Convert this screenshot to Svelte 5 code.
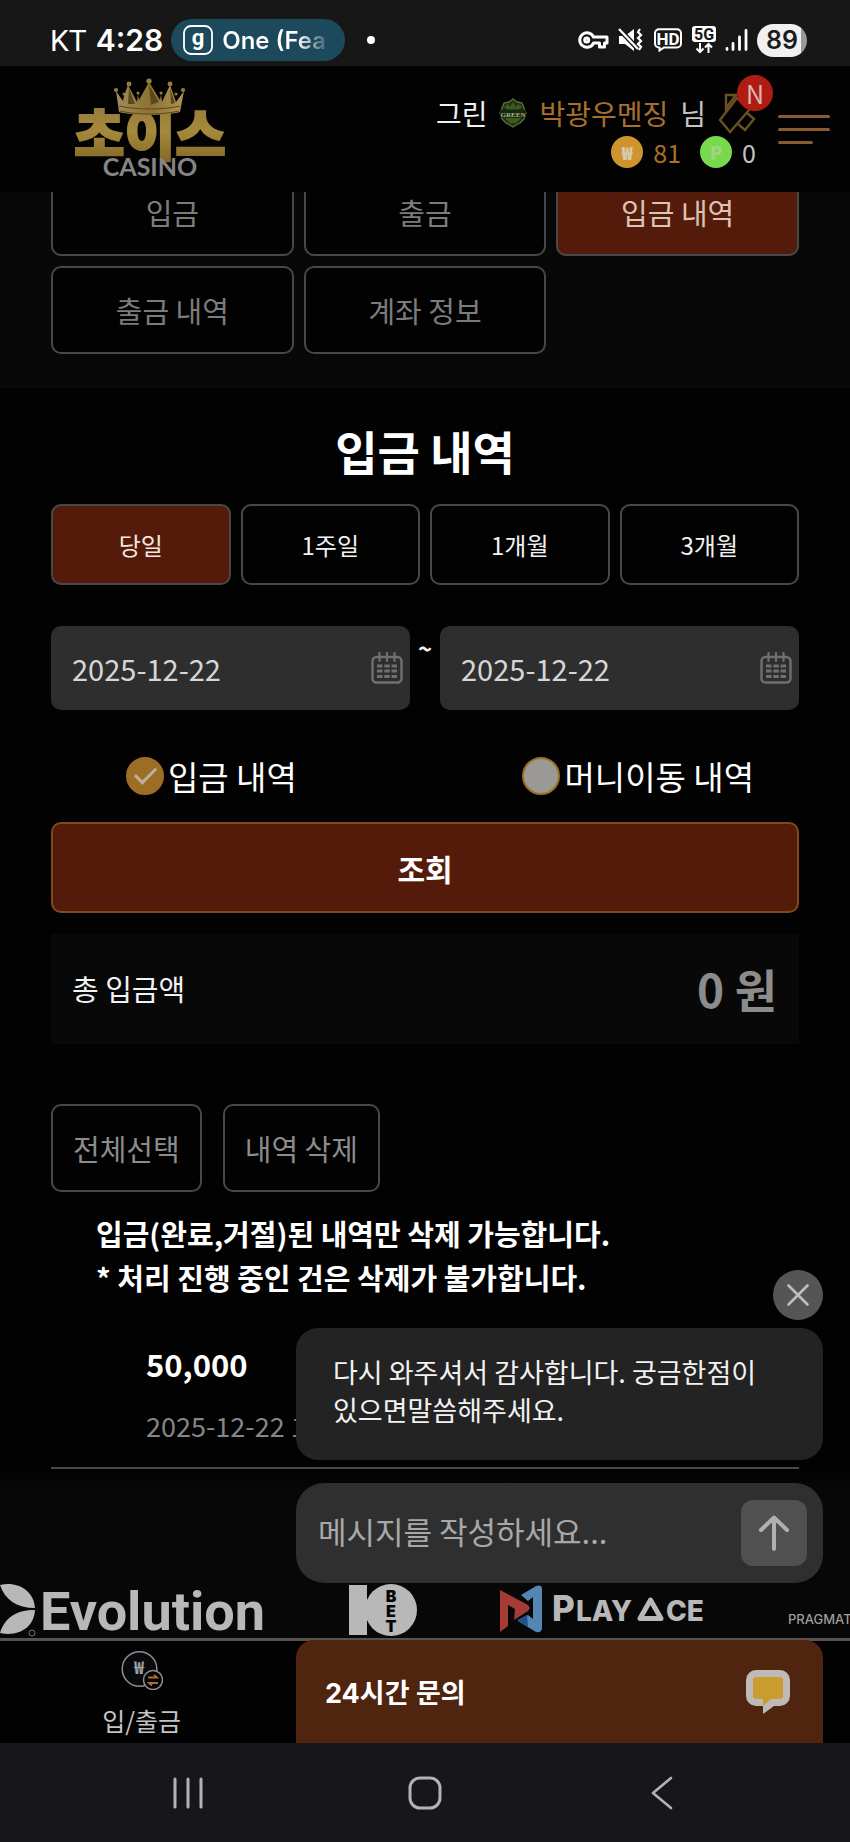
<script lang="ts">
  const menuTabs = ['입금', '출금', '입금 내역', '출금 내역', '계좌 정보'];
  const periods = ['당일', '1주일', '1개월', '3개월'];

  let activeTab = $state('입금 내역');
  let period = $state('당일');
  let from = $state('2025-12-22');
  let to = $state('2025-12-22');
  let kind = $state('deposit');
  let message = $state('');
  let greetingOpen = $state(true);
</script>

{#snippet calendar()}
  <svg class="calendar" width="32" height="32" viewBox="0 0 32 32" fill="none" aria-hidden="true">
    <rect x="1.5" y="5" width="29" height="25.5" rx="4" stroke="#707070" stroke-width="2.4" />
    <path d="M8.5 1v8M16 1v8M23.5 1v8" stroke="#707070" stroke-width="2.2" stroke-linecap="round" />
    <path d="M6 14h5.5M13.3 14h5.5M20.500 14h5.5M6 19h5.5M13.3 19h5.5M20.500 19h5.5M6 24.500h5.5M13.3 24.500h5.5M20.500 24.500h5.5" stroke="#707070" stroke-width="2.8" />
  </svg>
{/snippet}

<div class="screen">
  <div class="status-bar">
    <span class="carrier">KT</span>
    <span class="clock">4:28</span>
    <span class="now-bar">
      <svg width="30" height="30" viewBox="0 0 30 30" aria-hidden="true">
        <rect x="1" y="1" width="28" height="28" rx="7" fill="none" stroke="#fff" stroke-width="1.8" />
        <text x="15" y="20" text-anchor="middle" fill="#fff" font-family="Roboto, sans-serif" font-weight="700" font-size="22">g</text>
      </svg>
      <span class="now-text">One (Fea</span>
    </span>
    <span class="dot"></span>
    <div class="status-icons">
      <svg width="31" height="20" viewBox="0 0 31 20" fill="none" stroke="#fff" stroke-width="3" stroke-linejoin="round" aria-hidden="true">
        <path d="M15.500 7H29v6h-2.500v4h-5v-4h-6A7.200 7.200 0 1 1 15.500 7z" />
        <circle cx="8.700" cy="10" r="2" />
      </svg>
      <svg width="26" height="24" viewBox="0 0 26 24" fill="none" aria-hidden="true">
        <path d="M1 8h6l9-7v22l-9-7H1z" fill="#fff" />
        <path d="M1 1l20 21" stroke="#161616" stroke-width="5" />
        <path d="M1 1l19 20" stroke="#fff" stroke-width="2.400" />
        <path d="M22 1l-2 3 3 3-3 3 3 3-3 3 3 3-2 3" stroke="#fff" stroke-width="2.200" />
      </svg>
      <svg width="30" height="24" viewBox="0 0 30 24" fill="none" stroke="#fff" aria-hidden="true">
        <path d="M6 1.200h18a4 4 0 0 1 4 4v10.300a4 4 0 0 1-4 4H11l-4.500 3v-3H6a4 4 0 0 1-4-4V5.200a4 4 0 0 1 4-4z" stroke-width="2" />
        <text x="15" y="16.500" text-anchor="middle" fill="#fff" stroke="none" font-family="Roboto, sans-serif" font-weight="700" font-size="17">HD</text>
      </svg>
      <svg width="24" height="28" viewBox="0 0 24 28" fill="none" aria-hidden="true">
        <rect width="24" height="16" rx="3" fill="#fff" />
        <text x="12" y="13.500" text-anchor="middle" fill="#161616" font-family="Roboto, sans-serif" font-weight="700" font-size="16">5G</text>
        <path d="M8 17v9M4.500 22.500L8 26l3.500-3.500M16.500 27v-9M13 21.500l3.500-3.500 3.500 3.500" stroke="#fff" stroke-width="2" />
      </svg>
      <svg width="23" height="24" viewBox="0 0 23 24" fill="none" stroke="#fff" stroke-width="2.800" stroke-linecap="round" aria-hidden="true">
        <path d="M2 20.500v1M8 15.500v6M14.500 9v12.500M21 2.500v19" />
      </svg>
      <span class="battery">89</span>
    </div>
  </div>

  <header class="site-header">
    <a class="logo" href="#home" aria-label="초이스 CASINO">
      <svg width="150" height="102" viewBox="0 0 150 102">
        <defs>
          <linearGradient id="gold" x1="0" y1="0" x2="0" y2="1">
            <stop offset="0" stop-color="#8f7138" />
            <stop offset="0.5" stop-color="#a58a3c" />
            <stop offset="1" stop-color="#7b5d22" />
          </linearGradient>
          <linearGradient id="crown" x1="0" y1="0" x2="1" y2="0">
            <stop offset="0" stop-color="#a58a5b" />
            <stop offset="0.5" stop-color="#8d7230" />
            <stop offset="1" stop-color="#b09356" />
          </linearGradient>
        </defs>
        <text x="75" y="77" text-anchor="middle" fill="url(#gold)" stroke="url(#gold)" stroke-width="2" font-family="'Noto Sans CJK KR', sans-serif" font-weight="900" font-size="55">초이스</text>
        <g fill="url(#crown)">
          <path d="M44 34L41 13l7 10 1-5 4-11 9 17 1-8 1 6L74 4l11 18 1-6 1 8 8-17 6 17 8-11-4 21c-14 4-47 4-61 0z" />
          <circle cx="41" cy="12" r="2" />
          <circle cx="54" cy="6" r="2.400" />
          <circle cx="74" cy="3" r="2.600" />
          <circle cx="95" cy="6" r="2.400" />
          <circle cx="108" cy="12" r="2" />
          <circle cx="49" cy="16" r="1.500" />
          <circle cx="63" cy="15" r="1.500" />
          <circle cx="86" cy="15" r="1.500" />
          <circle cx="101" cy="16" r="1.500" />
        </g>
        <path d="M54 10l-1 16h7zM74 7l2 20 8-3zM95 10l1 16 4-1z" fill="#5c4820" />
        <path d="M44 28c17 4 45 4 61 0M45 33c16 4 43 4 59 0" stroke="#5c4820" fill="none" />
        <text x="75" y="98" text-anchor="middle" fill="#858585" font-family="Lato, sans-serif" font-weight="700" font-size="25">CASINO</text>
      </svg>
    </a>

    <div class="account">
      <div class="user-row">
        <span>그린</span>
        <svg width="28" height="30" viewBox="0 0 28 30" aria-hidden="true">
          <path d="M14 1l4 3 5 1 2 5 2 5-2 6-4 4-4 2-3 2-3-2-4-2-4-4-2-6 2-5 2-5 5-1z" fill="#1c3511" stroke="#66703f" stroke-width="1.300" />
          <path d="M5 9l4-3 2 3 3-5 3 5 2-3 4 3-4 3H9zM6 20h16l-5 5h-6z" fill="#3c5a22" />
          <rect x="1" y="11.500" width="26" height="8" fill="#16280d" />
          <text x="14" y="18.500" text-anchor="middle" fill="#b0b588" font-family="'Liberation Serif', serif" font-weight="700" font-size="7">GREEN</text>
        </svg>
        <span class="user-name">박광우멘징</span>
        <span class="suffix">님</span>
        <a class="message-link" href="#messages" aria-label="쪽지">
          <svg width="38" height="42" viewBox="0 0 38 42" fill="none" stroke="#6b5120" stroke-width="2.400" aria-hidden="true">
            <path d="M8 19V3h10L8 16M2 28L19 6l13 11-20 23z" />
            <path d="M20 32l7 6 9-11-7-6" />
          </svg>
          <span class="new-badge">N</span>
        </a>
      </div>
      <div class="balance-row">
        <span class="coin won">₩</span>
        <span class="money">81</span>
        <span class="coin point">P</span>
        <span>0</span>
      </div>
    </div>

    <button class="hamburger" aria-label="메뉴">
      <span></span><span></span><span class="short"></span>
    </button>
  </header>

  <nav class="menu-tabs">
    {#each menuTabs as tab}
      <button class:active={tab === activeTab} onclick={() => (activeTab = tab)}>{tab}</button>
    {/each}
  </nav>

  <main>
    <h1>입금 내역</h1>

    <div class="periods">
      {#each periods as item}
        <button class:active={item === period} onclick={() => (period = item)}>{item}</button>
      {/each}
    </div>

    <div class="dates">
      <label class="date-field">
        <input type="text" aria-label="시작일" bind:value={from} />
        {@render calendar()}
      </label>
      <span class="tilde">~</span>
      <label class="date-field">
        <input type="text" aria-label="종료일" bind:value={to} />
        {@render calendar()}
      </label>
    </div>

    <div class="kinds">
      <label><input type="radio" name="kind" value="deposit" bind:group={kind} />입금 내역</label>
      <label><input type="radio" name="kind" value="transfer" bind:group={kind} />머니이동 내역</label>
    </div>

    <button class="search">조회</button>

    <div class="total">
      <span>총 입금액</span>
      <strong>0 원</strong>
    </div>

    <div class="actions">
      <button>전체선택</button>
      <button>내역 삭제</button>
    </div>

    <p class="notice">입금(완료,거절)된 내역만 삭제 가능합니다.<br />* 처리 진행 중인 건은 삭제가 불가합니다.</p>

    <div class="record">
      <strong>50,000</strong>
      <time>2025-12-22 1</time>
    </div>
  </main>

  <footer class="providers">
    <svg class="evolution" width="272" height="54" viewBox="0 0 272 54" fill="#b8b8b8">
      <path d="M0 2C18-2 34 8 35 25 17 25 5 17 0 2zM0 50C5 34 17 27 35 27 34 45 18 54 0 50z" />
      <circle cx="32" cy="50" r="3" fill="none" stroke="#777" />
      <text x="40" y="47" font-family="Roboto, sans-serif" font-weight="700" font-size="54">Evolution</text>
    </svg>
    <svg class="tenbet" width="70" height="54" viewBox="0 0 70 54">
      <path d="M1 2h18v50H1z" fill="#b8b8b8" />
      <circle cx="43" cy="27" r="26" fill="#b8b8b8" />
      <g fill="#060606" font-family="Inter, sans-serif" font-weight="900" font-size="16" text-anchor="middle">
        <text x="43" y="19">B</text>
        <text x="43" y="34">E</text>
        <text x="43" y="49">T</text>
      </g>
    </svg>
    <svg class="playace" width="210" height="54" viewBox="0 0 210 54">
      <path d="M21 12L36 3q6-2 6 3v39q0 5-6 4L18 38l10-6 5 4V14l-5 4z" fill="#5487b5" />
      <path d="M17 37l10-5 1 12z" fill="#244f8d" />
      <path d="M0 7l28 15q3 3 0 6L14 37l1-11-7-4v21l-8 6z" fill="#a63a34" />
      <g fill="#b8b8b8" font-family="Inter, sans-serif" font-weight="800">
        <text x="52" y="38" font-size="35">P</text>
        <text x="76" y="38" font-size="28">LAY</text>
        <text x="166" y="38" font-size="28">CE</text>
      </g>
      <path d="M140 35.500h21L150.500 17z" fill="none" stroke="#b8b8b8" stroke-width="5" stroke-linejoin="round" />
    </svg>
    <span class="pragmatic">PRAGMATIC</span>
  </footer>

  <nav class="bottom-tabs">
    <a href="#wallet">
      <svg width="42" height="40" viewBox="0 0 42 40" fill="none" aria-hidden="true">
        <circle cx="18.500" cy="19" r="17.300" fill="#08090d" stroke="#8f8f92" stroke-width="1.500" />
        <text x="18" y="24" text-anchor="middle" fill="#a2a2a4" font-family="'Noto Sans CJK KR', sans-serif" font-weight="700" font-size="17">₩</text>
        <circle cx="32" cy="30" r="9.500" fill="#020205" stroke="#8f8f92" stroke-width="1.500" />
        <path d="M27 27.500h9l-3-2.500M37 33h-9l3 2.500" stroke="#a87424" stroke-width="1.800" />
      </svg>
      <span>입/출금</span>
    </a>
  </nav>

  <section class="chat">
    {#if greetingOpen}
      <button class="close" aria-label="닫기" onclick={() => (greetingOpen = false)}>
        <svg width="22" height="22" viewBox="0 0 22 22" fill="none" stroke="#bdbdbd" stroke-width="2.600" stroke-linecap="round" aria-hidden="true">
          <path d="M1.500 1.500l19 19M20.500 1.500l-19 19" />
        </svg>
      </button>
      <p class="greeting">다시 와주셔서 감사합니다. 궁금한점이 있으면말씀해주세요.</p>
    {/if}
    <form class="composer" onsubmit={(e) => e.preventDefault()}>
      <input type="text" placeholder="메시지를 작성하세요..." aria-label="메시지" bind:value={message} />
      <button aria-label="보내기">
        <svg width="32" height="36" viewBox="0 0 32 36" fill="none" stroke="#b0b0b0" stroke-width="4" stroke-linecap="round" stroke-linejoin="round" aria-hidden="true">
          <path d="M16 34V3M3 15L16 2.500 29 15" />
        </svg>
      </button>
    </form>
    <button class="chat-bar">
      <span>24시간 문의</span>
      <svg width="44" height="44" viewBox="0 0 44 44" aria-hidden="true">
        <path d="M10 0h24a10 10 0 0 1 10 10v16a10 10 0 0 1-10 10h-6l-11 8v-8h-7A10 10 0 0 1 0 26V10A10 10 0 0 1 10 0z" fill="#bdbab8" />
        <path d="M10 7h24a3 3 0 0 1 3 3v16a3 3 0 0 1-3 3h-9l-8 7v-7h-7a3 3 0 0 1-3-3V10a3 3 0 0 1 3-3z" fill="#c99c31" />
      </svg>
    </button>
  </section>

  <div class="system-nav">
    <button aria-label="최근 앱">
      <svg width="32" height="32" viewBox="0 0 32 32" stroke="#b3b2b7" stroke-width="3" stroke-linecap="round">
        <path d="M3 2v28M16 2v28M29 2v28" />
      </svg>
    </button>
    <button aria-label="홈">
      <svg width="34" height="34" viewBox="0 0 34 34" fill="none" stroke="#b3b2b7" stroke-width="3">
        <rect x="2" y="2" width="30" height="30" rx="10" />
      </svg>
    </button>
    <button aria-label="뒤로">
      <svg width="22" height="34" viewBox="0 0 22 34" fill="none" stroke="#b3b2b7" stroke-width="2.600" stroke-linecap="round" stroke-linejoin="round">
        <path d="M20 2L2 17l18 15" />
      </svg>
    </button>
  </div>
</div>

<style>
  :global(body) {
    margin: 0;
    background: #020202;
  }

  .screen {
    position: relative;
    overflow: hidden;
    background: #020202;
    color: #f2f2f2;
    font-family: 'Noto Sans CJK KR', 'Noto Sans', sans-serif;
  }

  .screen * {
    box-sizing: border-box;
  }

  button,
  input {
    margin: 0;
    font: inherit;
    color: inherit;
  }

  button {
    padding: 0;
    border: 0;
    background: none;
    cursor: pointer;
  }

  a {
    color: inherit;
    text-decoration: none;
  }

  svg {
    display: block;
    flex-shrink: 0;
  }

  /* phone status bar */
  .status-bar {
    display: flex;
    align-items: center;
    height: 66px;
    padding: 14px 43px 0 50px;
    background: #171717;
    color: #fff;
    font-family: Inter, sans-serif;
    font-size: 30px;
  }

  .carrier {
    font-family: Roboto, sans-serif;
  }

  .clock {
    margin-left: 9px;
    font-weight: 600;
  }

  .now-bar {
    display: flex;
    align-items: center;
    gap: 9px;
    height: 42px;
    width: 174px;
    margin-left: 8px;
    padding-left: 12px;
    border-radius: 21px;
    background: #1c4a5c;
    font-size: 24px;
    font-weight: 600;
  }

  .now-text {
    background: linear-gradient(90deg, #fff 72%, #1c4a5c 105%);
    background-clip: text;
    color: transparent;
    white-space: nowrap;
  }

  .dot {
    width: 8px;
    height: 8px;
    margin-left: 22px;
    border-radius: 50%;
    background: #fff;
  }

  .status-icons {
    display: flex;
    align-items: center;
    gap: 9px;
    margin-left: auto;
  }

  .battery {
    width: 50px;
    border-radius: 17px;
    background: linear-gradient(90deg, #f0f0f0 88%, #999 88%);
    color: #1b1b1b;
    font-size: 25px;
    font-weight: 600;
    line-height: 33px;
    text-align: center;
  }

  /* site header */
  .site-header {
    position: relative;
    z-index: 1;
    display: flex;
    align-items: center;
    height: 126px;
    padding: 0 20px 0 75px;
    background: #020202;
  }

  .account {
    display: flex;
    flex-direction: column;
    margin-left: auto;
    padding-top: 4px;
    font-size: 28px;
    line-height: 36px;
  }

  .user-row,
  .balance-row {
    display: flex;
    align-items: center;
    gap: 12px;
  }

  .user-name,
  .money {
    color: #a8702c;
  }

  .suffix {
    color: #c4c4c4;
  }

  .message-link {
    position: relative;
  }

  .new-badge {
    position: absolute;
    top: -17px;
    right: -17px;
    width: 36px;
    border-radius: 50%;
    background: #b01c13;
    color: #d8b8b4;
    font-size: 25px;
    line-height: 36px;
    text-align: center;
  }

  .balance-row {
    justify-content: flex-end;
    gap: 10px;
    color: #c4c4c4;
    font-size: 25px;
  }

  .coin {
    width: 32px;
    border-radius: 50%;
    color: #d6cdb4;
    font-size: 18px;
    font-weight: 900;
    line-height: 32px;
    text-align: center;
  }

  .won {
    background: #cf942f;
  }

  .point {
    margin-left: 9px;
    background: #78d94c;
    color: #9fd488;
  }

  .hamburger {
    display: flex;
    flex-direction: column;
    gap: 10px;
    width: 52px;
    margin-left: 22px;
  }

  .hamburger span {
    height: 3px;
    border-radius: 2px;
    background: #8a5a30;
  }

  .hamburger .short {
    width: 35px;
  }

  /* first row slides under the header */
  .menu-tabs {
    display: grid;
    grid-template-columns: repeat(3, 1fr);
    gap: 10px;
    margin-top: -24px;
    padding: 0 51px 34px;
    background: #080808;
    color: #7c7c7c;
    font-size: 29px;
  }

  .menu-tabs button,
  .periods button,
  .actions button {
    height: 88px;
    border: 2px solid #484848;
    border-radius: 10px;
    background: #020202;
  }

  .menu-tabs .active {
    background: #541b0a;
    color: #dcc3b6;
  }

  .periods .active {
    background: #541b0a;
    color: #f6e6de;
  }

  main {
    padding: 0 51px;
  }

  h1 {
    margin: 0;
    padding: 30px 0 22px;
    color: #fff;
    font-size: 46px;
    line-height: 64px;
    text-align: center;
  }

  .periods {
    display: grid;
    grid-template-columns: repeat(4, 1fr);
    gap: 10px;
    font-size: 24px;
  }

  .periods button {
    height: 81px;
  }

  .dates {
    display: flex;
    gap: 8px;
    margin-top: 41px;
  }

  .date-field {
    flex: 1;
    display: flex;
    align-items: center;
    min-width: 0;
    height: 84px;
    padding: 0 7px 0 21px;
    border-radius: 10px;
    background: #2f2e2f;
  }

  .date-field input {
    flex: 1;
    min-width: 0;
    padding: 0;
    border: 0;
    outline: 0;
    background: none;
    color: #d6d6d6;
    font-size: 29px;
  }

  .tilde {
    width: 14px;
    font-size: 24px;
    font-weight: 700;
    line-height: 44px;
    text-align: center;
  }

  .kinds {
    display: flex;
    justify-content: space-between;
    margin-top: 42px;
    padding: 0 45px 0 75px;
    color: #fff;
    font-size: 33px;
    line-height: 48px;
  }

  .kinds label {
    display: flex;
    align-items: center;
    gap: 4px;
  }

  .kinds input {
    display: grid;
    place-items: center;
    width: 38px;
    height: 38px;
    appearance: none;
    border: 2px solid #9c6d24;
    border-radius: 50%;
    background: #9b9995;
  }

  .kinds input:checked {
    background: #9c6d24;
  }

  .kinds input:checked::before {
    content: '';
    width: 18px;
    height: 9px;
    border: solid #b8b0a0;
    border-width: 0 0 3px 3px;
    transform: translateY(-3px) rotate(-45deg);
  }

  .search {
    display: block;
    width: 100%;
    height: 91px;
    margin-top: 22px;
    border: 2px solid #804a1c;
    border-radius: 10px;
    background: #541b0a;
    color: #fff;
    font-size: 30px;
    font-weight: 700;
  }

  .total {
    display: flex;
    align-items: center;
    justify-content: space-between;
    height: 110px;
    margin-top: 21px;
    padding: 0 22px 2px 21px;
    background: #080808;
    font-size: 29px;
  }

  .total strong {
    color: #8c8c8c;
    font-size: 46px;
    line-height: 64px;
  }

  .actions {
    display: flex;
    gap: 21px;
    margin-top: 60px;
    color: #8c8c8c;
    font-size: 29px;
  }

  .actions button {
    padding: 0 20px;
  }

  .notice {
    margin: 0;
    padding: 19px 45px 0;
    color: #fff;
    font-size: 29px;
    font-weight: 700;
    line-height: 44px;
  }

  .record {
    display: flex;
    flex-direction: column;
    margin-top: 43px;
    padding: 0 95px 19px;
    border-bottom: 2px solid #484848;
  }

  .record strong {
    color: #fff;
    font-size: 31px;
    line-height: 44px;
  }

  .record time {
    margin-top: 18px;
    color: #858585;
    font-size: 27px;
    line-height: 44px;
  }

  .providers {
    display: flex;
    align-items: flex-end;
    height: 172px;
    padding-bottom: 1px;
    overflow: hidden;
    border-bottom: 3px solid #565452;
    background: linear-gradient(#020202, #070707 20px);
  }

  .tenbet {
    margin-left: 76px;
  }

  .playace {
    margin-left: 82px;
  }

  .pragmatic {
    margin-left: 78px;
    color: #9c9c9c;
    font-family: Inter, sans-serif;
    font-size: 13px;
    font-weight: 500;
    line-height: 36px;
  }

  .bottom-tabs {
    display: grid;
    grid-template-columns: repeat(3, 1fr);
    height: 102px;
  }

  .bottom-tabs a {
    display: flex;
    flex-direction: column;
    align-items: center;
    padding-top: 9px;
    color: #c4c4c4;
    font-size: 25px;
    line-height: 36px;
  }

  .bottom-tabs span {
    margin-top: 12px;
  }

  /* live chat floats over the page */
  .chat {
    position: absolute;
    right: 27px;
    bottom: 99px;
    display: flex;
    flex-direction: column;
    width: 62%;
  }

  .close {
    display: grid;
    place-items: center;
    align-self: flex-end;
    width: 50px;
    height: 50px;
    border-radius: 50%;
    background: #555;
  }

  .greeting {
    margin: 8px 0 23px;
    padding: 25px 37px 31px;
    border-radius: 22px;
    background: #232323;
    font-size: 27px;
    line-height: 38px;
  }

  .composer {
    display: flex;
    align-items: center;
    height: 100px;
    padding: 0 16px 0 22px;
    border-radius: 28px;
    background: #2f2f2f;
  }

  .composer input {
    flex: 1;
    min-width: 0;
    padding: 0 0 5px;
    border: 0;
    outline: 0;
    background: none;
    font-size: 31px;
  }

  .composer input::placeholder {
    color: #a8a8a8;
    opacity: 1;
  }

  .composer button {
    display: grid;
    place-items: center;
    width: 66px;
    height: 66px;
    border-radius: 12px;
    background: #505050;
  }

  .chat-bar {
    display: flex;
    align-items: center;
    justify-content: space-between;
    height: 103px;
    margin-top: 57px;
    padding: 0 33px 0 29px;
    border-radius: 18px 18px 0 0;
    background: #4f250f;
    color: #fff;
    font-family: Inter, 'Noto Sans CJK KR', sans-serif;
    font-size: 27px;
    font-weight: 700;
  }

  /* android navigation */
  .system-nav {
    display: grid;
    grid-template-columns: repeat(3, 1fr);
    align-items: center;
    justify-items: center;
    height: 99px;
    padding: 0 69px;
    background: #17161a;
  }
</style>
